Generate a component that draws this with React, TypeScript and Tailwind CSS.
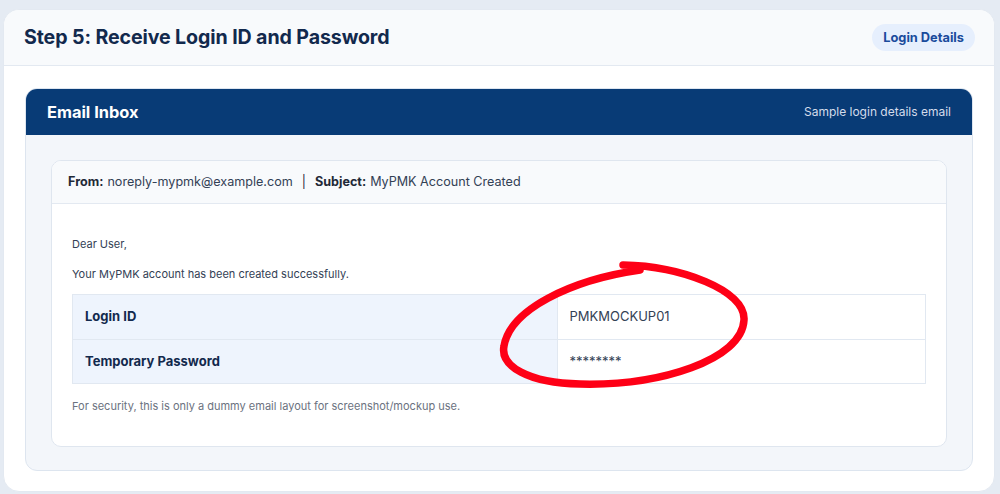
export default function App() {
  return (
    <main
      className="min-h-screen bg-[#e5ebf3] pt-[9px] pl-[3px] pr-[5px]"
      style={{ fontFamily: "Inter, 'Noto Sans', sans-serif" }}
    >
      <div className="h-[483px] rounded-2xl bg-white overflow-hidden border border-[#e3e9f1]">
        {/* Step header */}
        <div className="h-[56px] flex items-center justify-between pl-[20px] pr-[19px] bg-[#f8fafc] border-b border-[#e3e9f1]">
          <h1 className="text-[19.6px] font-bold text-[#12294d] tracking-[-0.1px]">
            Step 5: Receive Login ID and Password
          </h1>
          <span className="h-[27px] px-[11px] flex items-center rounded-full bg-[#e6effd] text-[12.8px] font-bold text-[#1a4b9c]">
            Login Details
          </span>
        </div>

        <div className="px-[21px] pt-[22px]">
          {/* Inbox card */}
          <div className="rounded-xl overflow-hidden border border-[#dde5ef] bg-[#f3f6fa]">
            <div className="h-[46px] flex items-center justify-between px-[21px] bg-[#083b76]">
              <h2 className="text-[16.4px] font-bold text-white">Email Inbox</h2>
              <span className="text-[12px] text-[#d4dceb]">Sample login details email</span>
            </div>

            <div className="p-[25px] pb-[23px]">
              <div className="relative rounded-[10px] overflow-hidden border border-[#dfe6ef] bg-white">
                <div className="h-[43px] flex items-center px-[16px] bg-[#f8fafc] border-b border-[#e3e9f1] text-[12.6px] text-[#334155]">
                  <span className="font-bold text-[#1f2937]">From:</span>
                  <span className="ml-1">noreply-mypmk@example.com</span>
                  <span className="mx-[9px] text-[#1f2937]">|</span>
                  <span className="font-bold text-[#1f2937]">Subject:</span>
                  <span className="ml-1">MyPMK Account Created</span>
                </div>

                <div className="px-[20px] pt-[32px] pb-[31px]">
                  <p className="text-[11px] text-[#334155] leading-[16px]">Dear User,</p>
                  <p className="text-[11px] text-[#334155] leading-[16px] mt-[14px]">
                    Your MyPMK account has been created successfully.
                  </p>

                  <table className="w-full mt-[12px] border-collapse text-[13px]">
                    <tbody>
                      <tr className="h-[45px]">
                        <td className="w-[56.8%] border border-[#e1e8f1] bg-[#eef4fd] pl-[12px] font-bold text-[#12294d]">
                          Login ID
                        </td>
                        <td className="border border-[#e1e8f1] pl-[12px] text-[#334155]">PMKMOCKUP01</td>
                      </tr>
                      <tr className="h-[44px]">
                        <td className="border border-[#e1e8f1] bg-[#eef4fd] pl-[12px] font-bold text-[#12294d]">
                          Temporary Password
                        </td>
                        <td className="border border-[#e1e8f1] pl-[12px] text-[#334155]">********</td>
                      </tr>
                    </tbody>
                  </table>

                  <p className="mt-[14px] text-[11px] text-[#6b7280]">
                    For security, this is only a dummy email layout for screenshot/mockup use.
                  </p>
                </div>
              </div>
            </div>
          </div>
        </div>
      </div>

      {/* hand-drawn red annotation */}
      <svg
        className="absolute left-0 top-0 pointer-events-none"
        width="1000"
        height="494"
        viewBox="0 0 1000 494"
      >
        <path
          d="M 623 265 C 680 266, 746 290, 744 320 C 742 360, 660 386, 580 384 C 528 383, 500 366, 504 346 C 510 310, 570 280, 640 270"
          fill="none"
          stroke="#fe0016"
          strokeWidth="7.5"
          strokeLinecap="round"
        />
      </svg>
    </main>
  );
}
